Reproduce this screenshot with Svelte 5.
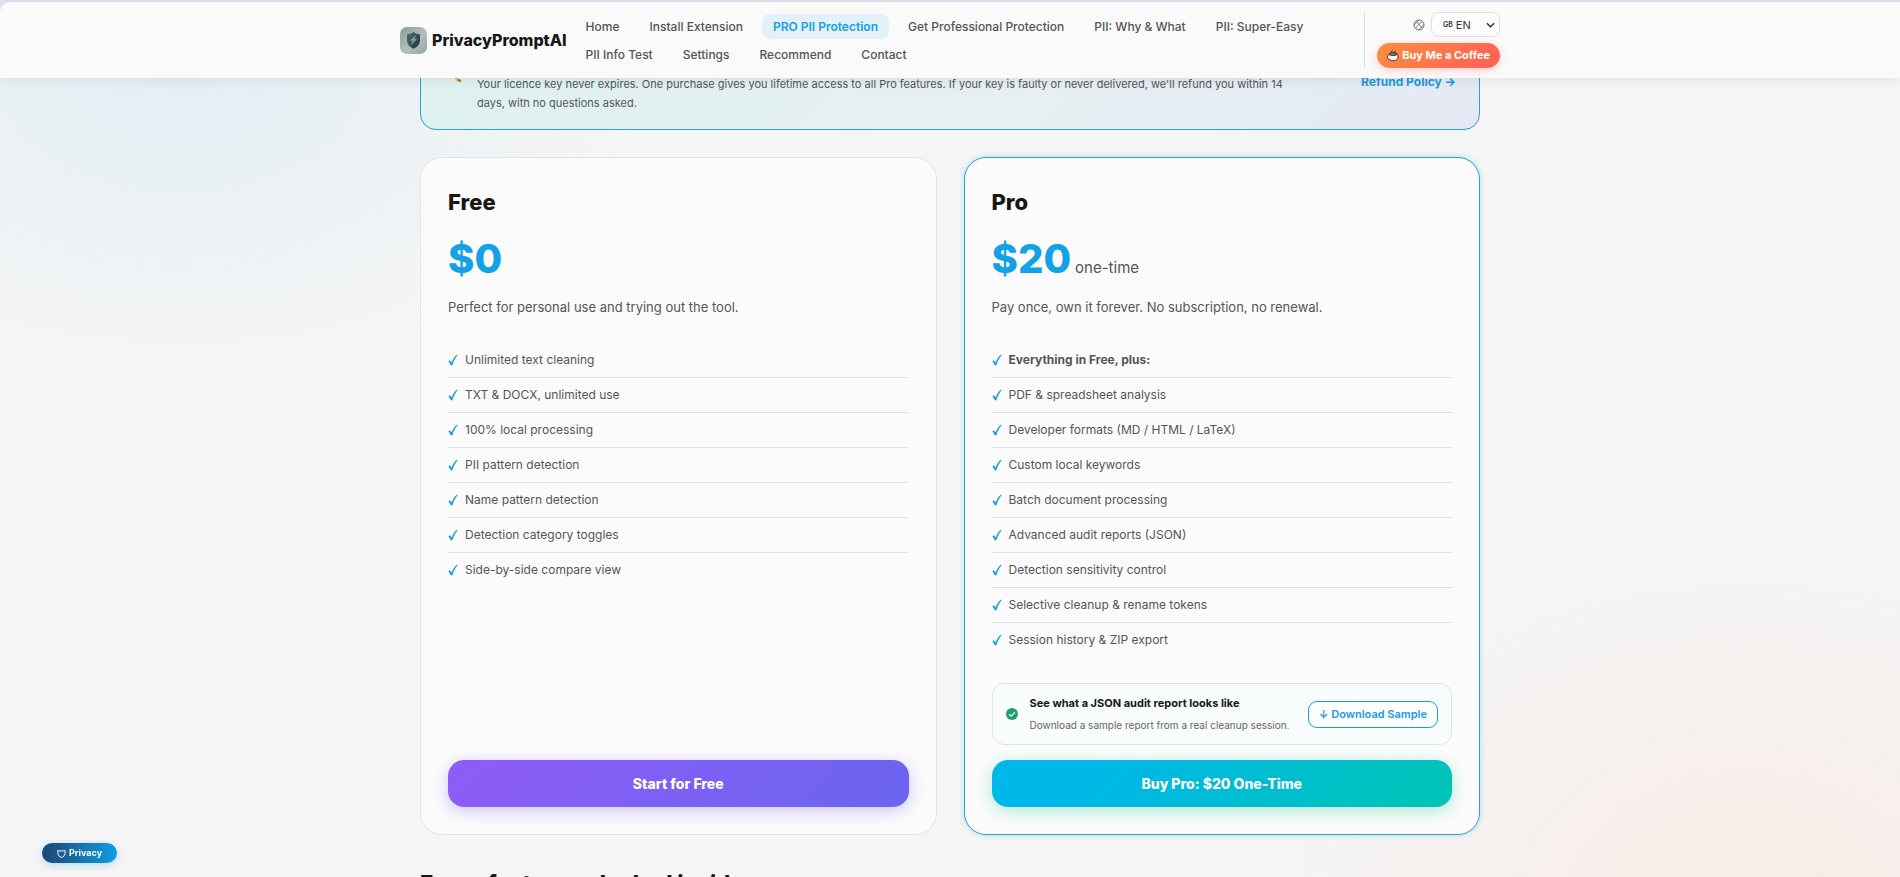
<script lang="ts">
    let lang = "en";

    const navLinks = [
        "Home",
        "Install Extension",
        "PRO PII Protection",
        "Get Professional Protection",
        "PII: Why & What",
        "PII: Super-Easy",
        "PII Info Test",
        "Settings",
        "Recommend",
        "Contact",
    ];
    const activeLink = "PRO PII Protection";

    const freeFeatures = [
        "Unlimited text cleaning",
        "TXT & DOCX, unlimited use",
        "100% local processing",
        "PII pattern detection",
        "Name pattern detection",
        "Detection category toggles",
        "Side-by-side compare view",
    ];

    const proFeatures = [
        "PDF & spreadsheet analysis",
        "Developer formats (MD / HTML / LaTeX)",
        "Custom local keywords",
        "Batch document processing",
        "Advanced audit reports (JSON)",
        "Detection sensitivity control",
        "Selective cleanup & rename tokens",
        "Session history & ZIP export",
    ];
</script>

{#snippet check()}
    <svg class="check" viewBox="0 0 10 12" aria-hidden="true">
        <path d="M0.4 7.2 L2 6.2 L3.6 8.6 C5 5 6.8 2.4 9 0.6 L9.6 1.2 C7.4 3.8 5.6 7.2 4.4 11.2 L3 11.4 Z" />
    </svg>
{/snippet}

<header>
    <div class="bar">
        <div class="bar-inner">
            <a class="brand" href="#home">
                <svg viewBox="0 0 27 27" aria-hidden="true">
                    <defs>
                        <linearGradient id="tile" x1="0" y1="0" x2="1" y2="1">
                            <stop offset="0" stop-color="#8c9996" />
                            <stop offset="0.55" stop-color="#b4bfbc" />
                            <stop offset="1" stop-color="#97a5a2" />
                        </linearGradient>
                        <linearGradient id="shield" x1="0" y1="0" x2="1" y2="1">
                            <stop offset="0" stop-color="#4d7068" />
                            <stop offset="1" stop-color="#1b3340" />
                        </linearGradient>
                    </defs>
                    <rect width="27" height="27" rx="7" fill="url(#tile)" />
                    <path d="M13.5 5 C15.5 6.6 17.8 7.2 20 7.2 V13 C20 17.4 17.2 20 13.5 21.8 C9.8 20 7 17.4 7 13 V7.2 C9.2 7.2 11.5 6.6 13.5 5 Z" fill="url(#shield)" />
                    <path d="M16.4 7.6 L9.6 13.8 L12.6 13.6 L10.4 18.8 L17.4 11.8 L14.4 12 Z" fill="#7fa394" />
                </svg>
                <span>PrivacyPromptAI</span>
            </a>
            <nav>
                {#each navLinks as link}
                    <a href="#nav" class:active={link === activeLink}>{link}</a>
                {/each}
            </nav>
            <div class="actions">
                <div class="lang">
                    <svg viewBox="0 0 12 12" aria-hidden="true">
                        <g fill="none" stroke="#777" stroke-width="1">
                            <circle cx="6" cy="6" r="5" />
                            <path d="M2.4 2.6 C5 4 8 7 9.4 9.6 M9.6 2.6 C7 4 4 7 2.6 9.6 M1 6.4 C3 3.4 5 2.4 6.4 1 M5.6 11 C7 9 9.4 7 11 5.6" />
                        </g>
                    </svg>
                    <label class="picker">
                        <span>GB</span>
                        <select bind:value={lang} aria-label="Language">
                            <option value="en">EN</option>
                        </select>
                        <svg viewBox="0 0 10 6" aria-hidden="true">
                            <path d="M1 1 L5 5 L9 1" fill="none" stroke="#333" stroke-width="1.6" />
                        </svg>
                    </label>
                </div>
                <a class="coffee" href="#coffee">
                    <svg viewBox="0 0 13 13" aria-hidden="true">
                        <path d="M2.2 5 C0 5.6 0 10 3 10.4 C4 12.2 9.4 12.2 10.6 10.2 C12.4 9 12.4 6 11.2 4.8 Z" fill="#f4f4f4" stroke="#222" stroke-width="0.9" />
                        <ellipse cx="6.8" cy="4.4" rx="4.4" ry="1.6" fill="#8b7468" stroke="#222" stroke-width="0.9" />
                        <path d="M4.4 2.4 C4.8 0.8 6 1.4 6.4 0.6 M7.6 2.2 C8 1.2 9 1.6 9.2 0.8" fill="none" stroke="#222" stroke-width="0.9" />
                    </svg>
                    Buy Me a Coffee
                </a>
            </div>
        </div>
    </div>
</header>

<main>
    <section class="licence">
        <svg class="key" viewBox="0 0 24 24" aria-hidden="true">
            <circle cx="8" cy="7" r="5" fill="none" stroke="#f3b53a" stroke-width="3" />
            <path d="M11 11 L20 22" stroke="#f3b53a" stroke-width="3" />
            <path d="M19 21 L22 22" stroke="#96733a" stroke-width="2" />
        </svg>
        <p>
            Your licence key never expires. One purchase gives you lifetime access to all Pro features. If your key is
            faulty or never delivered, we'll refund you within 14 days, with no questions asked.
        </p>
        <a href="#refund">Refund Policy →</a>
    </section>

    <div class="plans">
        <article class="card">
            <h2>Free</h2>
            <div class="price">$0</div>
            <p class="desc">Perfect for personal use and trying out the tool.</p>
            <ul>
                {#each freeFeatures as feature}
                    <li>{@render check()}{feature}</li>
                {/each}
            </ul>
            <button class="cta start">Start for Free</button>
        </article>

        <article class="card pro">
            <h2>Pro</h2>
            <div class="price">$20 <small>one-time</small></div>
            <p class="desc">Pay once, own it forever. No subscription, no renewal.</p>
            <ul>
                <li>{@render check()}<strong>Everything in Free, plus:</strong></li>
                {#each proFeatures as feature}
                    <li>{@render check()}{feature}</li>
                {/each}
            </ul>
            <div class="sample">
                <svg viewBox="0 0 12 12" aria-hidden="true">
                    <circle cx="6" cy="6" r="6" fill="#1f9d72" />
                    <path d="M3 6.2 L5.2 8.2 L9 4.2" fill="none" stroke="#d9f5ea" stroke-width="1.3" />
                </svg>
                <div class="sample-text">
                    <strong>See what a JSON audit report looks like</strong>
                    <span>Download a sample report from a real cleanup session.</span>
                </div>
                <button class="download">↓ Download Sample</button>
            </div>
            <button class="cta buy">Buy Pro: $20 One-Time</button>
        </article>
    </div>

    <h2 class="section-title">Every feature unlocked inside</h2>
</main>

<a class="privacy" href="#privacy">
    <svg viewBox="0 0 10 10" aria-hidden="true">
        <path d="M1 1.6 C3 2.4 7 2.4 9 1.6 V4.6 C9 7 7.4 8.4 5 9.4 C2.6 8.4 1 7 1 4.6 Z" fill="none" stroke="#fff" stroke-width="1.1" />
    </svg>
    Privacy
</a>

<style>
    :global(body) {
        font-family: Inter, "Liberation Sans", sans-serif;
        color: #555;
        background:
            radial-gradient(ellipse 460px 300px at 180px 70px, #e3eef4, #e3eef400),
            radial-gradient(ellipse 480px 340px at 92% 900px, #f8ece6, #f8ece600),
            #f5f5f5;
    }
    a {
        text-decoration: none;
    }
    button,
    select {
        font-family: inherit;
        cursor: pointer;
    }
    h2,
    p,
    ul {
        margin: 0;
        padding: 0;
    }

    header {
        position: fixed;
        top: 0;
        left: 0;
        right: 0;
        z-index: 10;
        padding-top: 2px;
        background: #dbe0ea;
        box-shadow: 0 2px 12px rgba(0, 0, 0, 0.08);
    }
    .bar {
        background: #fafafa;
        border-radius: 10px 0 0 0;
    }
    .bar-inner {
        display: flex;
        align-items: center;
        box-sizing: border-box;
        max-width: 1100px;
        margin: 0 auto;
        padding: 10px 0;
    }
    .brand {
        display: flex;
        align-items: center;
        gap: 5px;
        margin-right: 8px;
        font-size: 16px;
        font-weight: 800;
        color: #171717;
    }
    .brand svg {
        width: 27px;
        height: 27px;
    }
    nav {
        display: flex;
        flex: 1;
        flex-wrap: wrap;
        gap: 3px 8px;
    }
    nav a {
        padding: 5px 11px;
        border-radius: 8px;
        font-size: 12px;
        font-weight: 500;
        line-height: 15px;
        color: #555;
    }
    nav a.active {
        background: #e3f1f8;
        color: #16a0e6;
        font-weight: 600;
    }
    .actions {
        display: flex;
        flex-direction: column;
        align-items: flex-end;
        gap: 6px;
        padding-left: 12px;
        border-left: 1px solid #e0e0e0;
    }
    .lang {
        display: flex;
        align-items: center;
        gap: 6px;
    }
    .lang > svg {
        width: 12px;
        height: 12px;
    }
    .picker {
        display: flex;
        align-items: center;
        box-sizing: border-box;
        width: 69px;
        height: 25px;
        padding: 0 4px 0 11px;
        border: 1px solid #e0e0e0;
        border-radius: 8px;
        background: #fdfdfd;
        color: #333;
    }
    .picker span {
        font-size: 7px;
        font-weight: 600;
    }
    .picker select {
        flex: 1;
        width: 20px;
        padding: 0 0 0 3px;
        border: 0;
        background: none;
        color: inherit;
        font-size: 11px;
        appearance: none;
    }
    .picker svg {
        width: 9px;
        height: 6px;
    }
    .coffee {
        display: flex;
        align-items: center;
        gap: 3px;
        padding: 5px 10px;
        border-radius: 13px;
        background: linear-gradient(135deg, #ff8c42, #ff5f57);
        box-shadow: 0 2px 8px rgba(255, 107, 80, 0.3);
        color: #fff;
        font-size: 11px;
        font-weight: 700;
        line-height: 15px;
    }
    .coffee svg {
        width: 12px;
        height: 12px;
    }

    main {
        max-width: 1060px;
        margin: 0 auto;
        padding-top: 32px;
    }
    .licence {
        display: flex;
        align-items: center;
        box-sizing: border-box;
        min-height: 98px;
        padding: 0 23px 0 18px;
        border: 1px solid #2a9fd0;
        border-radius: 16px;
        background: linear-gradient(135deg, #ddf1ee, #e6f0f1 50%, #e5e9f5);
    }
    .key {
        flex: none;
        align-self: flex-start;
        width: 24px;
        height: 24px;
        margin-top: 26px;
    }
    .licence p {
        flex: 1;
        padding: 26px 48px 0 14px;
        font-size: 11px;
        line-height: 19px;
    }
    .licence a {
        font-size: 12px;
        font-weight: 700;
        color: #1c9be0;
    }

    .plans {
        display: grid;
        grid-template-columns: 1fr 1fr;
        gap: 27px;
        margin-top: 27px;
    }
    .card {
        display: flex;
        flex-direction: column;
        padding: 27px;
        border: 1px solid #e3e4e6;
        border-radius: 22px;
        background: #fbfbfb;
    }
    .card.pro {
        border-color: #2a9fd0;
        box-shadow: 0 0 6px rgba(56, 189, 248, 0.35);
    }
    .card h2 {
        margin-bottom: 16px;
        font-size: 22px;
        font-weight: 800;
        line-height: 34px;
        color: #171717;
    }
    .price {
        display: flex;
        align-items: baseline;
        gap: 4px;
        font-size: 40px;
        font-weight: 800;
        line-height: 48px;
        color: #11a2e8;
    }
    .price small {
        font-size: 15px;
        font-weight: 400;
        line-height: 20px;
        color: #555;
    }
    .desc {
        margin: 14px 0 26px;
        font-size: 13px;
        line-height: 20px;
    }
    ul {
        list-style: none;
        margin-bottom: 26px;
    }
    li {
        display: flex;
        align-items: center;
        gap: 7px;
        padding: 8px 0;
        border-bottom: 1px solid #e2e3e5;
        font-size: 12px;
        line-height: 18px;
    }
    li:last-child {
        border-bottom: 0;
    }
    li strong {
        font-weight: 700;
    }
    .check {
        width: 10px;
        height: 12px;
        fill: #1c9fe0;
    }
    .sample {
        display: flex;
        align-items: center;
        margin-bottom: 15px;
        padding: 10px 13px;
        border: 1px solid #e0e4e6;
        border-radius: 12px;
        background: #f9fcfd;
    }
    .sample > svg {
        width: 12px;
        height: 12px;
    }
    .sample-text {
        display: flex;
        flex: 1;
        flex-direction: column;
        gap: 4px;
        padding-left: 12px;
    }
    .sample-text strong {
        font-size: 11px;
        font-weight: 700;
        line-height: 18px;
        color: #171717;
    }
    .sample-text span {
        font-size: 10px;
        line-height: 18px;
        color: #666;
    }
    .download {
        height: 27px;
        padding: 0 10px;
        border: 1px solid #1c9fd6;
        border-radius: 9px;
        background: #fdfefe;
        color: #1c9be8;
        font-size: 11px;
        font-weight: 600;
    }
    .cta {
        height: 47px;
        margin-top: auto;
        border: 0;
        border-radius: 16px;
        color: #fff;
        font-size: 14px;
        font-weight: 800;
    }
    .start {
        background: linear-gradient(135deg, #8f5cf7, #6a64f1);
        box-shadow: 0 4px 16px rgba(120, 95, 245, 0.35);
    }
    .buy {
        background: linear-gradient(135deg, #00b7ea 20%, #00c4b4);
        box-shadow: 0 4px 16px rgba(16, 205, 140, 0.35);
    }

    .section-title {
        margin-top: 32px;
        font-size: 22px;
        font-weight: 800;
        line-height: 32px;
        color: #171717;
    }

    .privacy {
        position: fixed;
        bottom: 14px;
        left: 42px;
        display: flex;
        align-items: center;
        gap: 3px;
        padding: 4px 15px;
        border-radius: 10px;
        background: linear-gradient(90deg, #1d4576, #0f9fe2);
        box-shadow: 0 2px 8px rgba(14, 165, 233, 0.3);
        color: #fff;
        font-size: 9px;
        font-weight: 700;
        line-height: 12px;
    }
    .privacy svg {
        width: 9px;
        height: 9px;
    }
</style>
